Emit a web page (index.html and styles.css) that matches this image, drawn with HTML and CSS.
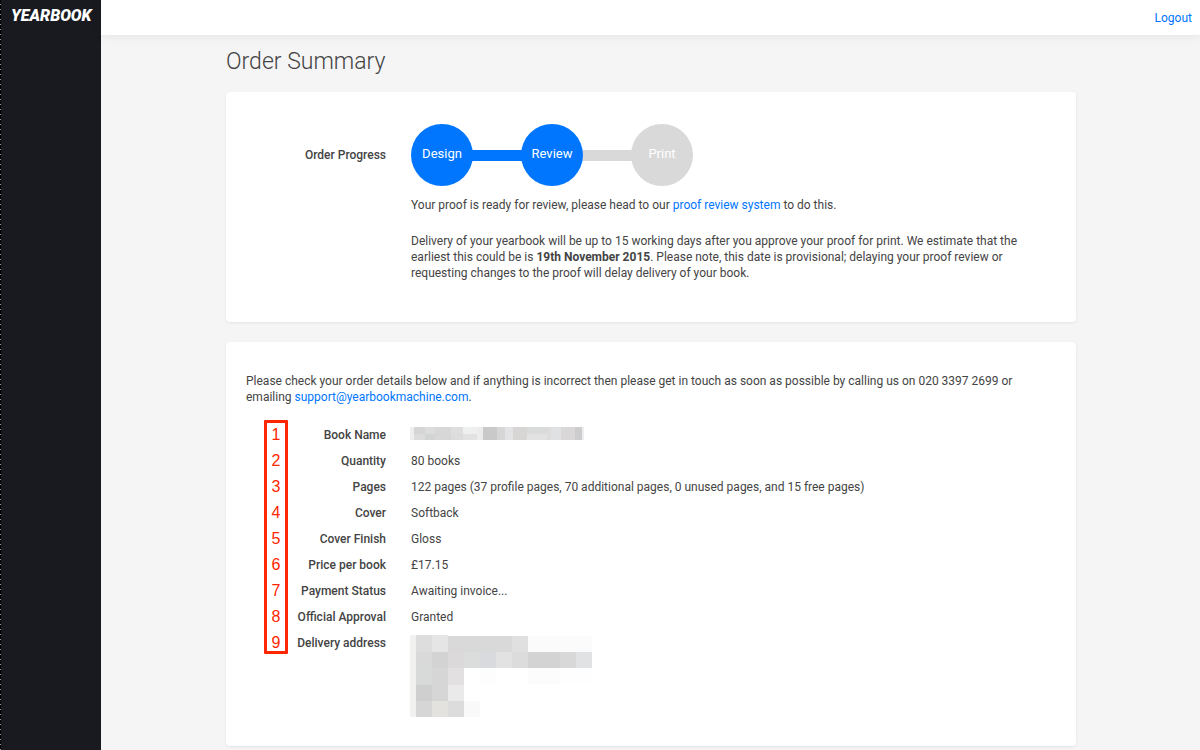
FILE: index.html
```html
<!DOCTYPE html>
<html lang="en">
<head>
  <meta charset="UTF-8" />
  <meta name="viewport" content="width=device-width, initial-scale=1.0" />
  <title>Order Summary</title>
  <link rel="stylesheet" href="styles.css">
</head>
<body>
  <aside class="sidebar">
    <a class="logo" href="#">YEARBOOK</a>
  </aside>

  <div class="page">
    <header class="topbar">
      <a href="#">Logout</a>
    </header>

    <main class="container">
      <h1>Order Summary</h1>

      <section class="card progress-card">
        <div class="progress-label">Order Progress</div>
        <div class="progress-body">
          <ol class="steps">
            <li class="step done">Design</li>
            <li class="step done">Review</li>
            <li class="step">Print</li>
          </ol>
          <p>Your proof is ready for review, please head to our <a href="#">proof review system</a> to do this.</p>
          <p>Delivery of your yearbook will be up to 15 working days after you approve your proof for print. We estimate that the earliest this could be is <strong>19th November 2015</strong>. Please note, this date is provisional; delaying your proof review or requesting changes to the proof will delay delivery of your book.</p>
        </div>
      </section>

      <section class="card details-card">
        <p>Please check your order details below and if anything is incorrect then please get in touch as soon as possible by calling us on 020 3397 2699 or emailing <a href="#">support@yearbookmachine.com</a>.</p>

        <div class="details">
          <ol class="markers">
            <li>1</li>
            <li>2</li>
            <li>3</li>
            <li>4</li>
            <li>5</li>
            <li>6</li>
            <li>7</li>
            <li>8</li>
            <li>9</li>
          </ol>

          <table>
            <tr>
              <th scope="row">Book Name</th>
              <td>
                <svg class="redacted" width="174" height="13" viewBox="0 0 174 13" shape-rendering="crispEdges" role="img" aria-label="Hidden book name">
                  <rect width="174" height="13" fill="#dcdcdc"/>
                  <rect width="4" height="13" fill="#eeeeee"/>
                  <rect x="4" width="11" height="7" fill="#d5d5d5"/>
                  <rect x="15" y="7" width="10" height="6" fill="#d2d4d3"/>
                  <rect x="25" width="16" height="13" fill="#d8d7d7"/>
                  <rect x="41" width="12" height="7" fill="#dfdddd"/>
                  <rect x="53" width="14" height="7" fill="#edf0ee"/>
                  <rect x="53" y="7" width="14" height="6" fill="#e2e2e2"/>
                  <rect x="67" width="6" height="13" fill="#ececec"/>
                  <rect x="73" width="14" height="13" fill="#c8c9c8"/>
                  <rect x="87" width="8" height="13" fill="#d5d6d5"/>
                  <rect x="95" width="8" height="13" fill="#e3e2e4"/>
                  <rect x="103" width="14" height="13" fill="#d8d5d5"/>
                  <rect x="117" width="20" height="7" fill="#d9dbda"/>
                  <rect x="117" y="7" width="20" height="6" fill="#e2e2e2"/>
                  <rect x="141" width="10" height="13" fill="#dfe1e3"/>
                  <rect x="151" width="14" height="13" fill="#d9d7d7"/>
                  <rect x="165" width="7" height="13" fill="#cccccf"/>
                  <rect x="172" width="2" height="13" fill="#eeeeee"/>
                </svg>
              </td>
            </tr>
            <tr>
              <th scope="row">Quantity</th>
              <td>80 books</td>
            </tr>
            <tr>
              <th scope="row">Pages</th>
              <td>122 pages (37 profile pages, 70 additional pages, 0 unused pages, and 15 free pages)</td>
            </tr>
            <tr>
              <th scope="row">Cover</th>
              <td>Softback</td>
            </tr>
            <tr>
              <th scope="row">Cover Finish</th>
              <td>Gloss</td>
            </tr>
            <tr>
              <th scope="row">Price per book</th>
              <td>£17.15</td>
            </tr>
            <tr>
              <th scope="row">Payment Status</th>
              <td>Awaiting invoice...</td>
            </tr>
            <tr>
              <th scope="row">Official Approval</th>
              <td>Granted</td>
            </tr>
            <tr>
              <th scope="row">Delivery address</th>
              <td>
                <svg class="redacted" width="182" height="82" viewBox="0 0 182 82" shape-rendering="crispEdges" role="img" aria-label="Hidden address">
                  <rect width="6" height="82" fill="#f1f1f0"/>
                  <rect x="6" width="16" height="17" fill="#dddddd"/>
                  <rect x="22" width="16" height="17" fill="#e5e5e5"/>
                  <rect x="38" y="1" width="64" height="16" fill="#d9d9d9"/>
                  <rect x="102" y="1" width="16" height="16" fill="#e0e0e0"/>
                  <rect x="118" y="1" width="64" height="16" fill="#fbfbfb"/>
                  <rect x="6" y="17" width="16" height="16" fill="#d9d9d9"/>
                  <rect x="22" y="17" width="16" height="16" fill="#d3d3d3"/>
                  <rect x="38" y="17" width="16" height="16" fill="#dcd9da"/>
                  <rect x="54" y="17" width="16" height="16" fill="#dadddb"/>
                  <rect x="70" y="17" width="16" height="16" fill="#d9dadd"/>
                  <rect x="86" y="17" width="16" height="16" fill="#e2e2e2"/>
                  <rect x="102" y="17" width="16" height="16" fill="#dcdcdc"/>
                  <rect x="118" y="17" width="32" height="16" fill="#d3d3d3"/>
                  <rect x="150" y="17" width="16" height="16" fill="#d8d8d8"/>
                  <rect x="166" y="17" width="16" height="16" fill="#e1e2e4"/>
                  <rect x="6" y="33" width="16" height="17" fill="#d7dad8"/>
                  <rect x="22" y="33" width="16" height="33" fill="#d6d6d6"/>
                  <rect x="38" y="33" width="16" height="17" fill="#e2e0e1"/>
                  <rect x="70" y="33" width="16" height="16" fill="#fdfdfd"/>
                  <rect x="118" y="33" width="32" height="16" fill="#fcfcfc"/>
                  <rect x="150" y="33" width="32" height="16" fill="#fefefe"/>
                  <rect x="6" y="50" width="16" height="16" fill="#cfcfcf"/>
                  <rect x="38" y="50" width="16" height="16" fill="#eaeaea"/>
                  <rect x="6" y="66" width="16" height="16" fill="#d6d6d6"/>
                  <rect x="22" y="66" width="16" height="16" fill="#e3e2df"/>
                  <rect x="38" y="66" width="16" height="16" fill="#dcdcdc"/>
                  <rect x="54" y="66" width="16" height="16" fill="#f9f9f9"/>
                </svg>
              </td>
            </tr>
          </table>
        </div>
      </section>
    </main>
  </div>
</body>
</html>
```
FILE: styles.css
```css
:root {
  --blue: #0076ff;
  --grey: #d9d9d9;
  --dark: #191a1f;
  --red: #ff2600;
  --text: #444;
}

* {
  box-sizing: border-box;
}

body {
  margin: 0;
  display: flex;
  min-height: 100vh;
  font-family: Roboto, sans-serif;
  font-size: 12px;
  line-height: 16px;
  color: var(--text);
  background-color: #f5f5f5;
}

a {
  color: var(--blue);
  text-decoration: none;
}

p {
  margin: 0;
}

.sidebar {
  flex: 0 0 101px;
  background-color: var(--dark);
  background-image: repeating-linear-gradient(#000 0 4px, #999 4px 5px);
  background-size: 1px 100%;
  background-repeat: no-repeat;
}

.logo {
  display: block;
  padding: 4px 0 0 11px;
  font-size: 16px;
  font-weight: 900;
  font-style: italic;
  line-height: 24px;
  color: #fff;
}

.page {
  flex: 1;
  min-width: 0;
}

.topbar {
  display: flex;
  justify-content: flex-end;
  padding: 10px 8px 9px;
  background-color: #fff;
  box-shadow: 0 1px 10px rgba(0, 0, 0, 0.08);
}

.container {
  max-width: 851px;
  margin: 0 auto;
  padding-left: 1px;
}

h1 {
  margin: 0;
  padding: 11px 0 14px;
  font-size: 23px;
  font-weight: 300;
  line-height: 32px;
}

.card {
  background-color: #fff;
  border-radius: 4px;
  box-shadow: 0 1px 3px rgba(0, 0, 0, 0.08);
}

.progress-card {
  display: flex;
  gap: 25px;
  padding: 32px 20px 41px;
  margin-bottom: 20px;
}

.progress-label {
  flex: 0 0 140px;
  line-height: 62px;
  font-weight: 500;
  text-align: right;
}

.steps {
  display: flex;
  gap: 48px;
  margin: 0 0 11px;
  padding: 0;
  list-style: none;
  isolation: isolate;
}

.step {
  position: relative;
  width: 62px;
  height: 62px;
  border-radius: 50%;
  background-color: var(--grey);
  color: #fff;
  font-size: 13px;
  line-height: 60px;
  text-align: center;
}

/* bar joining a step to the one before it */
.step + .step::before {
  content: "";
  position: absolute;
  z-index: -1;
  top: 26px;
  right: 60px;
  width: 52px;
  height: 11px;
  background-color: var(--grey);
}

.step.done,
.step.done + .step.done::before {
  background-color: var(--blue);
}

.progress-body p + p {
  margin-top: 20px;
}

.details-card {
  padding: 31px 20px 24px;
}

.details {
  position: relative;
  margin-top: 17px;
}

.details table {
  width: 100%;
  border-collapse: collapse;
}

.details th,
.details td {
  padding: 5px 0;
  vertical-align: top;
}

.details th {
  width: 140px;
  font-weight: 500;
  text-align: right;
}

.details td {
  padding-left: 25px;
}

.redacted {
  display: block;
  margin-left: -1px;
}

/* numbered callout drawn over the left edge of the table */
.markers {
  position: absolute;
  top: -2px;
  left: 18px;
  width: 24px;
  height: 234px;
  margin: 0;
  padding: 0;
  border: 3px solid var(--red);
  border-radius: 1px;
  list-style: none;
  font-family: "Liberation Sans", Arial, sans-serif;
  font-size: 16px;
  line-height: 26px;
  text-align: center;
  color: var(--red);
}

.markers li {
  height: 26px;
  line-height: 24px;
}
```
